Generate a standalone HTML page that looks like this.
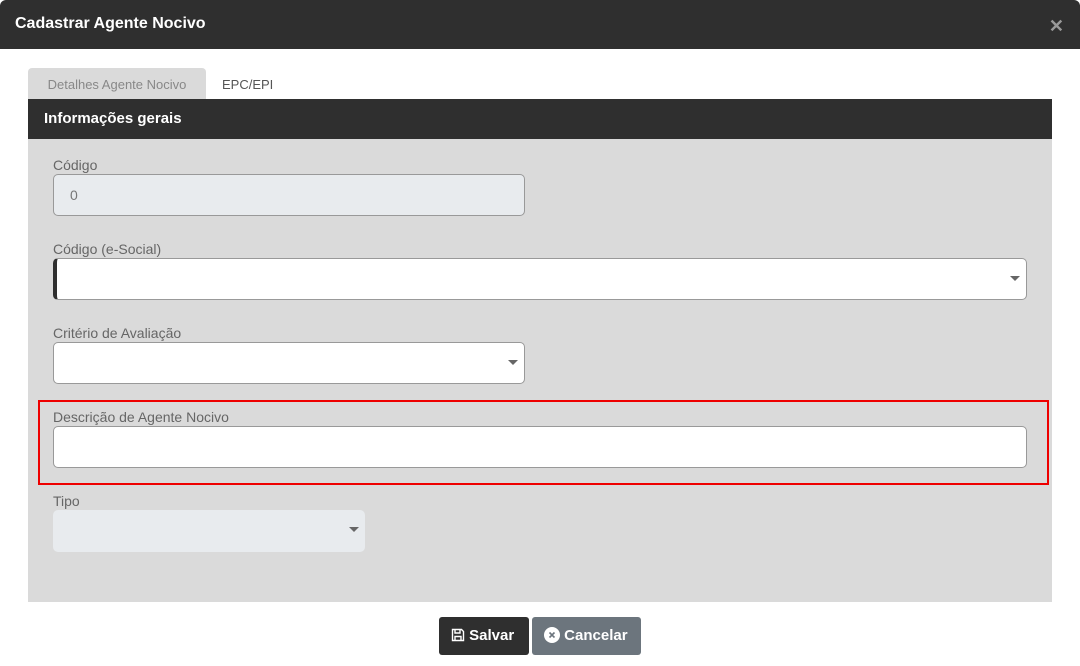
<!DOCTYPE html>
<html><head><style>
*{box-sizing:border-box;margin:0;padding:0}
body{width:1080px;height:666px;background:#fff;font-family:"Liberation Sans",sans-serif;position:relative;overflow:hidden}
.hdr{position:absolute;left:0;top:0;width:1080px;height:49px;background:#2f2f2f;border-radius:6px 6px 0 0}
.hdr h1{position:absolute;left:15px;top:15px;color:#fff;font-size:16px;font-weight:bold}
.x{position:absolute;right:16px;top:16px;color:#999;font-size:18px;font-weight:bold}
.tab1{position:absolute;left:28px;top:68px;width:178px;height:31px;background:#dadada;border-radius:4px 4px 0 0;color:#888;font-size:13px;text-align:center;line-height:33px}
.tab2{position:absolute;left:222px;top:68px;line-height:33px;font-size:13px;color:#555}
.sec{position:absolute;left:28px;top:99px;width:1024px;height:40px;background:#2f2f2f;color:#fff;font-weight:bold;font-size:15px;padding:11px 16px}
.body{position:absolute;left:28px;top:139px;width:1024px;height:463px;background:#dadada}
.lbl{position:absolute;left:53px;font-size:14px;color:#666}
.in{position:absolute;left:53px;height:42px;background:#fff;border:1px solid #999;border-radius:5px}
.dis{background:#e8ebee}
.car{position:absolute;right:6px;top:17px;width:0;height:0;border-left:5px solid transparent;border-right:5px solid transparent;border-top:5px solid #666}
.red{position:absolute;left:38px;top:400px;width:1011px;height:85px;border:2px solid #e00}
.btn{position:absolute;top:617px;height:38px;border-radius:3px;color:#fff;font-weight:bold;font-size:15px;line-height:38px}
</style></head><body>
<div class="hdr"><h1>Cadastrar Agente Nocivo</h1><div class="x">✕</div></div>
<div class="tab1">Detalhes Agente Nocivo</div>
<div class="tab2">EPC/EPI</div>
<div class="sec">Informações gerais</div>
<div class="body"></div>
<div class="lbl" style="top:157px">Código</div>
<div class="in dis" style="top:174px;width:472px;color:#777;font-size:14px;padding:12px 16px">0</div>
<div class="lbl" style="top:241px">Código (e-Social)</div>
<div class="in" style="top:258px;width:974px;border-left:4px solid #2f2f2f"><div class="car"></div></div>
<div class="lbl" style="top:325px">Critério de Avaliação</div>
<div class="in" style="top:342px;width:472px"><div class="car"></div></div>
<div class="red"></div>
<div class="lbl" style="top:409px">Descrição de Agente Nocivo</div>
<div class="in" style="top:426px;width:974px"></div>
<div class="lbl" style="top:493px">Tipo</div>
<div class="in dis" style="top:510px;width:312px;border:none"><div class="car"></div></div>
<div class="btn" style="left:439px;width:90px;background:#2f2f2f;padding-left:12px">
<svg width="14" height="14" viewBox="0 0 14 14" style="vertical-align:-2px"><path d="M1.5 1.5h9l2 2v9h-11z M4 1.5v3.5h5V1.5 M4 12.5V8.5h6v4" fill="none" stroke="#fff" stroke-width="1.4"/></svg> Salvar</div>
<div class="btn" style="left:532px;width:109px;background:#6c757d;padding-left:12px">
<svg width="16" height="16" viewBox="0 0 16 16" style="vertical-align:-3px"><circle cx="8" cy="8" r="8" fill="#fff"/><path d="M5.5 5.5l5 5M10.5 5.5l-5 5" stroke="#6c757d" stroke-width="1.6"/></svg> Cancelar</div>
</body></html>
